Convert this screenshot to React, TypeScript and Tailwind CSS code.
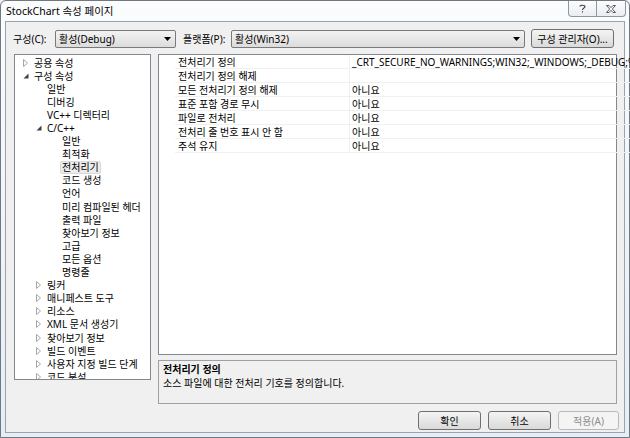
import React from 'react';

const tree: { label: string; level: number; arrow?: 'open' | 'closed'; selected?: boolean }[] = [
  { label: '공용 속성', level: 0, arrow: 'closed' },
  { label: '구성 속성', level: 0, arrow: 'open' },
  { label: '일반', level: 1 },
  { label: '디버깅', level: 1 },
  { label: 'VC++ 디렉터리', level: 1 },
  { label: 'C/C++', level: 1, arrow: 'open' },
  { label: '일반', level: 2 },
  { label: '최적화', level: 2 },
  { label: '전처리기', level: 2, selected: true },
  { label: '코드 생성', level: 2 },
  { label: '언어', level: 2 },
  { label: '미리 컴파일된 헤더', level: 2 },
  { label: '출력 파일', level: 2 },
  { label: '찾아보기 정보', level: 2 },
  { label: '고급', level: 2 },
  { label: '모든 옵션', level: 2 },
  { label: '명령줄', level: 2 },
  { label: '링커', level: 1, arrow: 'closed' },
  { label: '매니페스트 도구', level: 1, arrow: 'closed' },
  { label: '리소스', level: 1, arrow: 'closed' },
  { label: 'XML 문서 생성기', level: 1, arrow: 'closed' },
  { label: '찾아보기 정보', level: 1, arrow: 'closed' },
  { label: '빌드 이벤트', level: 1, arrow: 'closed' },
  { label: '사용자 지정 빌드 단계', level: 1, arrow: 'closed' },
  { label: '코드 분석', level: 1, arrow: 'closed' },
];

const props = [
  ['전처리기 정의', '_CRT_SECURE_NO_WARNINGS;WIN32;_WINDOWS;_DEBUG;%(PreprocessorDefinitions)'],
  ['전처리기 정의 해제', ''],
  ['모든 전처리기 정의 해제', '아니요'],
  ['표준 포함 경로 무시', '아니요'],
  ['파일로 전처리', '아니요'],
  ['전처리 줄 번호 표시 안 함', '아니요'],
  ['주석 유지', '아니요'],
];

// indent of the text per tree level (px from panel edge)
const textLeft = ['pl-[19px]', 'pl-[32px]', 'pl-[47px]'];
const arrowLeft = ['left-[8px]', 'left-[21px]', 'left-[36px]'];

function Arrow({ kind }: { kind: 'open' | 'closed' }) {
  if (kind === 'open') {
    return (
      <svg width="6" height="6" viewBox="0 0 6 6">
        <path d="M5.5 0.5 L5.5 5.5 L0.5 5.5 Z" fill="#404040" />
      </svg>
    );
  }
  return (
    <svg width="5" height="8" viewBox="0 0 5 8">
      <path d="M0.5 0.5 L4.5 4 L0.5 7.5 Z" fill="white" stroke="#a6a6a6" strokeWidth="1" />
    </svg>
  );
}

function Combo({ text, w }: { text: string; w: string }) {
  return (
    <div className={`${w} h-[18px] flex items-center justify-between rounded-[2px] border border-[#7a7a7a] bg-gradient-to-b from-[#f3f3f3] to-[#dcdcdc] pl-[3px] pr-[4px]`}>
      <span>{text}</span>
      <svg width="7" height="4" viewBox="0 0 7 4">
        <path d="M0 0 L7 0 L3.5 4 Z" fill="#000" />
      </svg>
    </div>
  );
}

function Btn({ text, w, disabled }: { text: string; w: string; disabled?: boolean }) {
  return (
    <div
      className={`${w} h-[19px] flex items-center justify-center rounded-[3px] border ${
        disabled
          ? 'border-[#b5b9bd] bg-[#f4f4f4] text-[#8d8d8d]'
          : 'border-[#707070] bg-gradient-to-b from-[#f4f4f4] to-[#dadada]'
      }`}
    >
      {text}
    </div>
  );
}

export default function App() {
  return (
    <div className="w-[630px] h-[438px] overflow-hidden bg-[#f0f0f0] font-['Noto_Sans','Noto_Sans_CJK_KR',sans-serif] text-[10px] text-black leading-none">
      {/* WINDOW FRAME */}
      <div className="w-[630px] h-[438px] flex flex-col border border-[#707882] rounded-t-[6px] bg-gradient-to-b from-[#fbfcfd] to-[#e6edf5]">
        {/* TITLE BAR */}
        <div className="h-[20px] flex items-start justify-between shrink-0">
          <span className="pl-[5px] pt-[5px] text-[10.5px]">StockChart 속성 페이지</span>
          <div className="flex mr-[3px]">
            <div className="w-[29px] h-[16px] flex items-center justify-center border border-t-0 border-[#8f96a0] rounded-bl-[4px] bg-gradient-to-b from-[#fdfdfd] to-[#e9edf2]">
              <svg width="7" height="9" viewBox="0 0 7 9">
                <path d="M1 2.5 C1 0.8 6 0.8 6 2.5 C6 4 3.5 4 3.5 6 M3.5 7.3 L3.5 8.6" fill="none" stroke="#3c3c3c" strokeWidth="1.1" />
              </svg>
            </div>
            <div className="w-[29px] h-[16px] flex items-center justify-center border border-t-0 border-l-0 border-[#8f96a0] rounded-br-[4px] bg-gradient-to-b from-[#fdfdfd] to-[#e9edf2]">
              <svg width="10" height="8" viewBox="0 0 10 8">
                <path d="M0.5 0.5 H3 L5 2.7 L7 0.5 H9.5 L6.3 4 L9.5 7.5 H7 L5 5.3 L3 7.5 H0.5 L3.7 4 Z" fill="white" stroke="#4a4a4a" strokeWidth="0.9" />
              </svg>
            </div>
          </div>
        </div>

        {/* CLIENT AREA */}
        <div className="mx-[4px] h-[412px] flex flex-col border border-[#9aa3ad] bg-[#f0f0f0]">
          {/* CONFIG ROW */}
          <div className="mt-[7px] h-[19px] flex items-center pl-[7px]">
            <span className="w-[42px]">구성(C):</span>
            <Combo text="활성(Debug)" w="w-[121px]" />
            <span className="ml-[7px] w-[48px]">플랫폼(P):</span>
            <Combo text="활성(Win32)" w="w-[294px]" />
            <div className="ml-[6px]">
              <Btn text="구성 관리자(O)..." w="w-[83px]" />
            </div>
          </div>

          {/* MAIN */}
          <div className="mt-[6px] h-[350px] flex pl-[8px]">
            {/* TREE */}
            <div className="w-[137px] h-[326px] border border-[#828790] bg-white overflow-hidden pt-[1px]">
              {tree.map((t, i) => (
                <div key={i} className={`relative h-[13.1px] flex items-center ${textLeft[t.level]}`}>
                  {t.arrow && (
                    <span className={`absolute ${arrowLeft[t.level]} top-0 h-full flex items-center`}>
                      <Arrow kind={t.arrow} />
                    </span>
                  )}
                  <span
                    className={
                      t.selected
                        ? 'h-[13px] flex items-center px-[1px] -ml-[2px] rounded-[2px] border border-[#d9d9d9] bg-[#ececec]'
                        : ''
                    }
                  >
                    {t.label}
                  </span>
                </div>
              ))}
            </div>

            {/* RIGHT SIDE */}
            <div className="ml-[7px] w-[459px] flex flex-col">
              {/* PROPERTY GRID */}
              <div className="h-[301px] border border-[#828790] bg-white flex">
                <div className="flex-1 pl-[16px] pt-[0px]">
                  {props.map(([k, v], i) => (
                    <div key={i} className="h-[14px] flex border-b border-[#f0f0f0]">
                      <div className="w-[175px] pl-[3px] flex items-center border-r border-[#f0f0f0]">{k}</div>
                      <div className="flex-1 pl-[2px] flex items-center overflow-hidden whitespace-nowrap">{v}</div>
                    </div>
                  ))}
                </div>
                <div className="w-[2px] border-l border-[#d4d4d4] bg-[#f7f7f7]" />
              </div>

              {/* DESCRIPTION */}
              <div className="mt-[5px] h-[44px] border border-[#a0a0a0] bg-[#f0f0f0] px-[4px] pt-[3px] flex flex-col gap-[4px]">
                <span className="font-bold">전처리기 정의</span>
                <span>소스 파일에 대한 전처리 기호를 정의합니다.</span>
              </div>
            </div>
          </div>

          {/* BUTTONS */}
          <div className="mt-[7px] flex justify-end gap-[7px] pr-[5px]">
            <Btn text="확인" w="w-[63px]" />
            <Btn text="취소" w="w-[63px]" />
            <Btn text="적용(A)" w="w-[61px]" disabled />
          </div>
        </div>
      </div>
    </div>
  );
}
